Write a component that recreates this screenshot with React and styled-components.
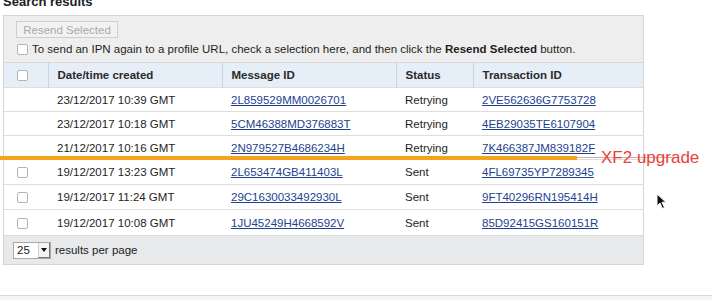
import React from 'react';
import styled, { createGlobalStyle } from 'styled-components';

const Global = createGlobalStyle`
  html, body { margin: 0; padding: 0; background: #fff; }
  body { font-family: "Liberation Sans", Arial, Helvetica, sans-serif; }
`;

const Page = styled.div`
  position: relative;
  width: 712px;
  height: 300px;
  overflow: hidden;
  background: #fff;
`;

const Content = styled.div`
  padding-left: 3px;
`;

const Title = styled.h2`
  margin: -6px 0 0;
  font-size: 13px;
  line-height: 15px;
  font-weight: bold;
  color: #222;
`;

const Panel = styled.div`
  margin-top: 6px;
  width: 639px;
  border: 1px solid #d6d6d6;
`;

const Toolbar = styled.div`
  background: #eeeeee;
  padding: 5px 12px 6px;
  display: flex;
  flex-direction: column;
  align-items: flex-start;
  gap: 4px;
`;

const Button = styled.button`
  height: 17px;
  width: 102px;
  padding: 0;
  margin: 0;
  font-family: inherit;
  font-size: 11.5px;
  color: #a9a9a9;
  background: #f2f2f2;
  border: 1px solid #cfcfcf;
  border-radius: 0;
`;

const Note = styled.div`
  display: flex;
  align-items: center;
  gap: 4px;
  height: 14px;
  font-size: 11.5px;
  color: #1e1e1e;
  b { font-weight: bold; }
`;

const Box = styled.span`
  display: inline-block;
  box-sizing: border-box;
  width: 11px;
  height: 11px;
  border: 1px solid #b4b4b4;
  border-radius: 2px;
  background: #fff;
  margin-left: ${(p) => p.$ml || 0}px;
  flex-shrink: 0;
  vertical-align: middle;
`;

const Table = styled.table`
  border-collapse: collapse;
  table-layout: fixed;
  width: 639px;
  font-size: 11.5px;
  color: #1e1e1e;
`;

const Th = styled.th`
  height: 24px;
  padding: 0 0 0 ${(p) => (p.$check ? 13 : 9)}px;
  text-align: left;
  font-weight: bold;
  color: #2a2a2a;
  background: #e6eef8;
  border-top: 1px solid #d4d8dc;
  border-left: ${(p) => (p.$check ? 'none' : '1px solid #cad3de')};
  vertical-align: middle;
`;

const Td = styled.td`
  height: ${(p) => p.$h}px;
  padding: 0 0 0 ${(p) => (p.$check ? 13 : 9)}px;
  border-top: 1px solid #dedede;
  vertical-align: middle;
  white-space: nowrap;
  line-height: 14px;
`;

const Link = styled.a`
  color: #233f8f;
  text-decoration: underline;
`;

const Footer = styled.div`
  height: 28px;
  border-top: 1px solid #dadada;
  background: #e8e9eb;
  display: flex;
  align-items: center;
  gap: 4px;
  padding-left: 9px;
  font-size: 11.5px;
  color: #222;
`;

const Select = styled.div`
  box-sizing: border-box;
  width: 38px;
  height: 17px;
  background: #fff;
  border: 1px solid #a8a8a8;
  display: flex;
  align-items: center;
  justify-content: space-between;
  padding-left: 3px;
  font-size: 11.5px;
`;

const Arrow = styled.span`
  box-sizing: border-box;
  width: 12px;
  height: 15px;
  background: #f4f4f4;
  border-left: 1px solid #d0d0d0;
  border-right: 1px solid #777;
  border-bottom: 1px solid #777;
  display: flex;
  align-items: center;
  justify-content: center;
  &::after {
    content: '';
    border-left: 3px solid transparent;
    border-right: 3px solid transparent;
    border-top: 4px solid #111;
  }
`;

const BottomBar = styled.div`
  margin-top: 30px;
  height: 20px;
  border-top: 1px solid #d9d9d9;
  background: #f5f5f5;
`;

const OrangeLine = styled.div`
  position: absolute;
  left: 0;
  top: 156px;
  width: 577px;
  height: 4px;
  background: #f5a31c;
`;

const FaintLine = styled.div`
  position: absolute;
  left: 577px;
  top: 157px;
  width: 96px;
  height: 1px;
  background: #d9a7a3;
`;

const Label = styled.div`
  position: absolute;
  left: 601px;
  top: 148px;
  font-size: 17px;
  line-height: 20px;
  color: #e4433b;
`;

const Cursor = styled.svg`
  position: absolute;
  left: 656px;
  top: 193px;
`;

const rows = [
  ['23/12/2017 10:39 GMT', '2L859529MM0026701', 'Retrying', '2VE562636G7753728', false, 23],
  ['23/12/2017 10:18 GMT', '5CM46388MD376883T', 'Retrying', '4EB29035TE6107904', false, 23],
  ['21/12/2017 10:16 GMT', '2N979527B4686234H', 'Retrying', '7K466387JM839182F', false, 23],
  ['19/12/2017 13:23 GMT', '2L653474GB411403L', 'Sent', '4FL69735YP7289345', true, 24],
  ['19/12/2017 11:24 GMT', '29C1630033492930L', 'Sent', '9FT40296RN195414H', true, 24],
  ['19/12/2017 10:08 GMT', '1JU45249H4668592V', 'Sent', '85D92415GS160151R', true, 25],
];

export default function App() {
  return (
    <Page>
      <Global />
      <Content>
        <Title>Search results</Title>
        <Panel>
          <Toolbar>
            <Button disabled>Resend Selected</Button>
            <Note>
              <Box $ml={1} />
              <span>
                To send an IPN again to a profile URL, check a selection here, and then click the{' '}
                <b>Resend Selected</b> button.
              </span>
            </Note>
          </Toolbar>
          <Table>
            <colgroup>
              <col style={{ width: 44 }} />
              <col style={{ width: 174 }} />
              <col style={{ width: 174 }} />
              <col style={{ width: 77 }} />
              <col style={{ width: 170 }} />
            </colgroup>
            <thead>
              <tr>
                <Th $check>
                  <Box />
                </Th>
                <Th>Date/time created</Th>
                <Th>Message ID</Th>
                <Th>Status</Th>
                <Th>Transaction ID</Th>
              </tr>
            </thead>
            <tbody>
              {rows.map(([date, msg, status, tx, check, h]) => (
                <tr key={msg}>
                  <Td $check $h={h}>{check && <Box />}</Td>
                  <Td $h={h}>{date}</Td>
                  <Td $h={h}>
                    <Link href="#">{msg}</Link>
                  </Td>
                  <Td $h={h}>{status}</Td>
                  <Td $h={h}>
                    <Link href="#">{tx}</Link>
                  </Td>
                </tr>
              ))}
            </tbody>
          </Table>
          <Footer>
            <Select>
              <span>25</span>
              <Arrow />
            </Select>
            <span>results per page</span>
          </Footer>
        </Panel>
      </Content>
      <BottomBar />
      <OrangeLine />
      <FaintLine />
      <Label>XF2 upgrade</Label>
      <Cursor width="11" height="17" viewBox="0 0 11 17">
        <path d="M1 1 L1 13 L4 10 L6.5 15.5 L8.5 14.5 L6 9.2 L10 9.2 Z" fill="#111" stroke="#fff" strokeWidth="1" />
      </Cursor>
    </Page>
  );
}
